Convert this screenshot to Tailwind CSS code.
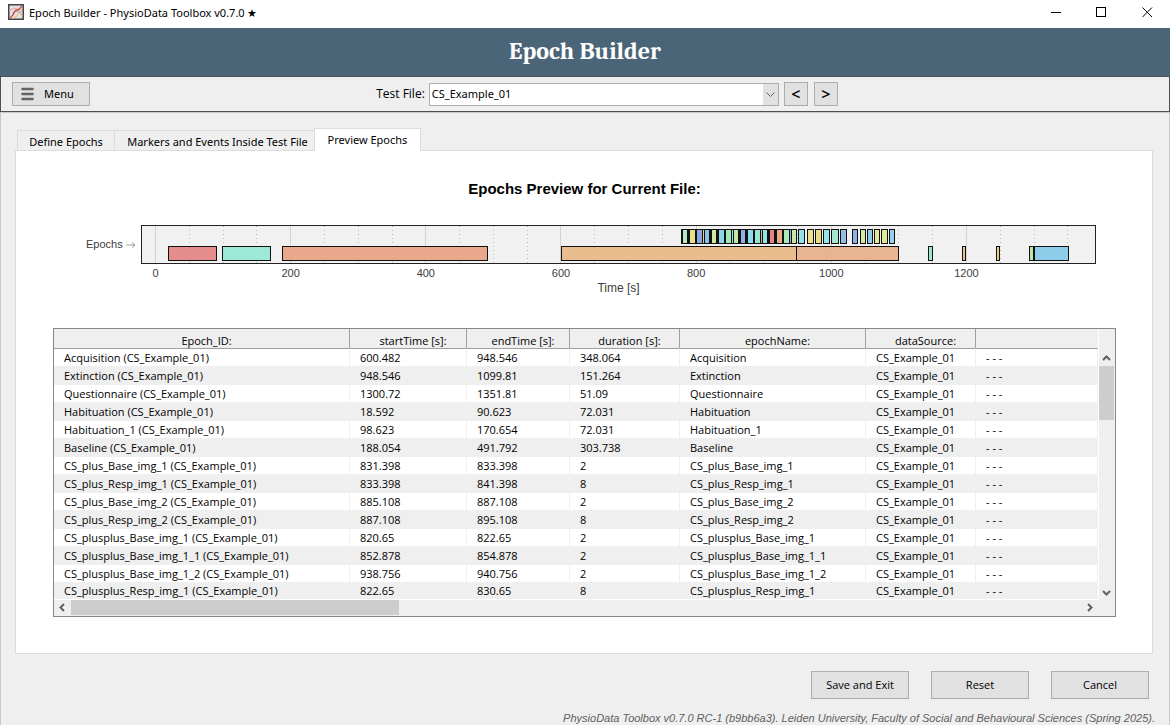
<!DOCTYPE html>
<html lang="en">
<head>
<meta charset="utf-8">
<title>Epoch Builder - PhysioData Toolbox v0.7.0</title>
<script src="https://cdn.jsdelivr.net/npm/@tailwindcss/browser@4"></script>
</head>
<body class="flex min-h-screen flex-col bg-[#efefef] font-['Open_Sans','Noto_Sans',sans-serif] text-[11px] text-black">

<header class="flex h-7 items-center bg-white pl-2">
  <svg class="-mt-1 h-4 w-4" viewBox="0 0 16 16" fill="none" aria-hidden="true">
    <rect x=".75" y=".75" width="14.5" height="14.5" fill="#e3e1e1" stroke="#444" stroke-width="1.5"/>
    <path d="M1.500 7Q5 3 8 5T14.500 12" stroke="#eda8a8" stroke-width="1.200"/>
    <path d="M5 14Q9 13 10 10T14 5" stroke="#f0c47c" stroke-width="1.200"/>
    <path d="M4 9Q8 6 10 8T14 7" stroke="#9fb6d8"/>
    <path d="M2 14L5 11Q7 6 9 6T14 2" stroke="#d04a44" stroke-width="1.300"/>
  </svg>
  <span class="-mt-0.5 ml-[5px] font-['Noto_Sans','Open_Sans',sans-serif]">Epoch Builder - PhysioData Toolbox v0.7.0 ★</span>
  <div class="ml-auto flex h-full pb-[3px]">
    <button class="grid h-full w-[46px] place-items-center" aria-label="Minimize"><svg class="h-[11px] w-[11px]" viewBox="0 0 11 11"><path d="M1 5.500H11" stroke="#000"/></svg></button>
    <button class="grid h-full w-[46px] place-items-center" aria-label="Maximize"><svg class="h-[11px] w-[11px]" viewBox="0 0 11 11" fill="none"><rect x=".5" y=".5" width="9" height="9" stroke="#000"/></svg></button>
    <button class="grid h-full w-[46px] place-items-center" aria-label="Close"><svg class="h-[11px] w-[11px]" viewBox="0 0 11 11"><path d="M.5 .5L10 10M10 .5L.5 10" stroke="#000"/></svg></button>
  </div>
</header>

<div class="flex h-12 items-center justify-center bg-[#4a6478] pb-0.5">
  <h1 class="font-['Cambria','Noto_Serif','Liberation_Serif',serif] text-2xl font-bold text-white">Epoch Builder</h1>
</div>

<div class="grid h-9 grid-cols-[1fr_auto_1fr] items-center border border-[#505050] px-[11px]">
  <button class="flex h-6 w-[78px] items-center border border-[#adadad] bg-[#e1e1e1] pl-2 font-['Noto_Sans','Open_Sans',sans-serif]">
    <svg class="mr-[9px] h-3.5 w-3.5" viewBox="0 0 14 14" stroke="#636363" stroke-width="2.500" stroke-linecap="round" aria-hidden="true"><path d="M1.500 2H11.500M1.500 7H11.500M1.500 12H11.500"/></svg>Menu
  </button>
  <div class="flex items-center pl-11">
    <label for="file" class="mr-1 text-xs">Test File:</label>
    <div class="relative h-[23px] w-[350px]">
      <select id="file" class="h-full w-full appearance-none border border-[#adadad] bg-white pl-0.5 font-['Noto_Sans','Open_Sans',sans-serif] text-[11px]"><option>CS_Example_01</option></select>
      <span class="pointer-events-none absolute inset-y-px right-px grid w-[15px] place-items-center bg-[#e1e1e1]"><svg class="h-[5px] w-[9px]" viewBox="0 0 9 5" fill="none"><path d="M.5 .5L4.500 4.500L8.500 .5" stroke="#606060"/></svg></span>
    </div>
    <button class="ml-[5px] grid h-6 w-6 place-items-center border border-[#adadad] bg-[#e1e1e1] text-base font-semibold leading-none" aria-label="Previous file">&lt;</button>
    <button class="ml-1.5 grid h-6 w-6 place-items-center border border-[#adadad] bg-[#e1e1e1] text-base font-semibold leading-none" aria-label="Next file">&gt;</button>
  </div>
  <div></div>
</div>

<main class="flex flex-1 flex-col border border-b-0 border-[#c8c8c8] pb-px pl-3.5 pr-4 pt-[15px]">
  <div class="flex h-[22px] items-end whitespace-nowrap pl-0.5 font-['Noto_Sans','Open_Sans',sans-serif]" role="tablist">
    <button role="tab" class="h-5 w-[98px] border border-b-0 border-[#dcdcdc] leading-[22px]">Define Epochs</button>
    <button role="tab" class="h-5 w-[199px] border border-x-0 border-b-0 border-[#dcdcdc] pl-1.5 leading-[22px]">Markers and Events Inside Test File</button>
    <button role="tab" aria-selected="true" class="z-10 -mb-px h-[23px] w-[107px] border border-b-0 border-[#dcdcdc] bg-white leading-[22px]">Preview Epochs</button>
  </div>

  <section class="flex-1 border border-[#dcdcdc] bg-white pl-[37px] pr-9">
    <h2 class="mt-7 text-center font-['Liberation_Sans',sans-serif] text-[15px] font-bold leading-5">Epochs Preview for Current File:</h2>
    <svg id="chart" class="mt-6 block w-full" viewBox="53 223 1063 75" font-family="Liberation Sans, Arial, sans-serif" font-size="11" fill="#3c3c3c" role="img" aria-label="Epochs over time"></svg>

    <div class="mt-[30px] border border-[#828790] bg-[#efefef]">
      <div class="flex">
        <div class="flex-1 overflow-hidden border-b border-r border-white bg-[#efefef]">
          <table class="w-full table-fixed border-separate border-spacing-0">
            <colgroup><col class="w-[296px]"><col class="w-[117px]"><col class="w-[103px]"><col class="w-[110px]"><col class="w-[186px]"><col class="w-[110px]"><col></colgroup>
            <thead>
              <tr class="h-[19px] bg-[#efefef] leading-[15px] *:border-r *:border-[#a0a0a0] *:p-0 *:pl-2.5 *:pt-1 *:text-center *:font-normal">
                <th>Epoch_ID:</th><th>startTime [s]:</th><th>endTime [s]:</th><th>duration [s]:</th><th>epochName:</th><th>dataSource:</th><th class="border-r-0!"></th>
              </tr>
            </thead>
            <tbody id="rows"></tbody>
          </table>
        </div>
        <div class="flex w-4 flex-col pb-1 pt-[26px]">
          <svg class="ml-[3px] h-[6px] w-[9px]" viewBox="0 0 9 6" fill="none"><path d="M1 5L4.500 1.500L8 5" stroke="#606060" stroke-width="2"/></svg>
          <div class="mt-[5px] h-[54px] w-[15px] bg-[#cdcdcd]"></div>
          <svg class="ml-[3px] mt-auto h-[6px] w-[9px]" viewBox="0 0 9 6" fill="none"><path d="M1 1L4.500 4.500L8 1" stroke="#606060" stroke-width="2"/></svg>
        </div>
      </div>
      <div class="flex h-4 items-center pb-px pl-[5px]">
        <svg class="h-[9px] w-[6px]" viewBox="0 0 6 9" fill="none"><path d="M5 1L1.500 4.500L5 8" stroke="#606060" stroke-width="2"/></svg>
        <div class="ml-1.5 h-[15px] w-[328px] bg-[#cdcdcd]"></div>
        <svg class="ml-auto mr-[22px] h-[9px] w-[6px]" viewBox="0 0 6 9" fill="none"><path d="M1 1L4.500 4.500L1 8" stroke="#606060" stroke-width="2"/></svg>
      </div>
    </div>
    <div class="h-9"></div>
  </section>

  <div class="mt-[17px] flex justify-end gap-[22px] pr-1">
    <button class="h-7 w-[98px] border border-[#adadad] bg-[#e1e1e1] pt-px">Save and Exit</button>
    <button class="h-7 w-[98px] border border-[#adadad] bg-[#e1e1e1] pt-px">Reset</button>
    <button class="h-7 w-[98px] border border-[#adadad] bg-[#e1e1e1] pt-px">Cancel</button>
  </div>
  <footer class="-mr-0.5 mt-[13px] text-right font-['Liberation_Sans',sans-serif] text-[11px] italic leading-[13px] text-[#606060]">PhysioData Toolbox v0.7.0 RC-1 (b9bb6a3). Leiden University, Faculty of Social and Behavioural Sciences (Spring 2025).</footer>
</main>

<script>
const rows = [
  ['Acquisition','600.482','948.546','348.064'],['Extinction','948.546','1099.81','151.264'],
  ['Questionnaire','1300.72','1351.81','51.09'],['Habituation','18.592','90.623','72.031'],
  ['Habituation_1','98.623','170.654','72.031'],['Baseline','188.054','491.792','303.738'],
  ['CS_plus_Base_img_1','831.398','833.398','2'],['CS_plus_Resp_img_1','833.398','841.398','8'],
  ['CS_plus_Base_img_2','885.108','887.108','2'],['CS_plus_Resp_img_2','887.108','895.108','8'],
  ['CS_plusplus_Base_img_1','820.65','822.65','2'],['CS_plusplus_Base_img_1_1','852.878','854.878','2'],
  ['CS_plusplus_Base_img_1_2','938.756','940.756','2'],['CS_plusplus_Resp_img_1','822.65','830.65','8']
];
document.getElementById('rows').innerHTML = rows.map((r, i) =>
  `<tr class="h-[18px] leading-4 last:h-[17px] *:border-t *:border-r *:border-r-[#efefef] *:p-0 *:pl-2.5 ${i === 0 ? 'bg-white *:border-t-[#a0a0a0]' : i % 2 ? 'bg-[#efefef] *:border-t-[#efefef]' : 'bg-white *:border-t-[#efefef]'}">` +
  [`${r[0]} (CS_Example_01)`, r[1], r[2], r[3], r[0], 'CS_Example_01', '- - -'].map(c => `<td>${c}</td>`).join('') + '</tr>').join('');

const x = t => 155.5 + t * 0.6758;
let s = '<rect x="141.5" y="225.500" width="954" height="38" fill="#f1f1f1"/>';
for (let t = 0; t <= 1350; t += 50) {
  const px = Math.round(x(t) - .5) + .5;
  s += t % 200 ? `<path d="M${px} 226V263" stroke="#b8b8b8" stroke-dasharray="1 3"/>` : `<path d="M${px} 226V263" stroke="#d2d2d2"/>`;
}
const bar = (a, b, y, c) => `<rect x="${a}" y="${y}" width="${b - a}" height="14" fill="${c}" fill-opacity=".93" stroke="#111"/>`;
[[168.5,216.5,'#e48484'],[222.5,270.5,'#96e8d6'],[282.5,487.5,'#e8a284'],[561.5,796.5,'#e8b987'],[796.5,898.5,'#e8b08a'],
 [928.5,932.5,'#96e8cc'],[962.5,965.5,'#e8c080'],[996.5,999.5,'#e8cc80'],[1029.500,1033.500,'#b8e6a8'],[1034.500,1068.500,'#86cae8']
].forEach(b => s += bar(b[0], b[1], 246.5, b[2]));

s += '<rect x="681" y="229" width="116" height="15" fill="#111"/>';
[[683,4,'#b4e8c0'],[690,5,'#e6e088'],[697,5,'#8ca4e8'],[703,1,'#e8d080'],[705,4,'#8cc0e8'],[712,4,'#d0e8a0'],[719,5,'#8cd8e8'],
 [726,5,'#a0e8b8'],[732,1,'#8ce0e8'],[734,4,'#c4e8a4'],[741,4,'#8cb0e8'],[748,5,'#8cdcea'],[755,5,'#96e8d6'],[761,1,'#e8a888'],
 [763,4,'#8ce8e0'],[770,4,'#e48484'],[777,5,'#e8ac88'],[784,5,'#a8e8bc'],[790,1,'#8caae8'],[792,4,'#c4e8a0']
].forEach(b => s += `<rect x="${b[0]}" y="230" width="${b[1]}" height="13" fill="${b[2]}"/>`);
[[798.5,804.5,'#8ce0e8'],[807.5,813.5,'#ece088'],[815.5,821.5,'#e8dc84'],[823.5,829.5,'#8ce4e8'],[831.5,838.5,'#9ee8cc'],[840.5,846.5,'#8cb8e8'],
 [852.5,857.5,'#8cace8'],[860.5,865.5,'#cce8a0'],[867.5,872.5,'#8cc8ea'],[874.5,879.5,'#e0e890'],[881.5,887.5,'#dce890'],[889.5,894.5,'#8cd0ea']
].forEach(b => s += bar(b[0], b[1], 229.5, b[2]));
s += '<rect x="141.5" y="225.500" width="954" height="38" fill="none" stroke="#222"/>';
for (let t = 0; t <= 1200; t += 200) s += `<text x="${x(t)}" y="277" text-anchor="middle">${t}</text>`;
s += '<text x="86" y="248">Epochs</text><path d="M126 245H135M132 242.500L135 245L132 247.500" fill="none" stroke="#777" stroke-width=".7"/><text x="618.500" y="292" text-anchor="middle" font-size="12">Time [s]</text>';
document.getElementById('chart').innerHTML = s;
</script>
</body>
</html>
